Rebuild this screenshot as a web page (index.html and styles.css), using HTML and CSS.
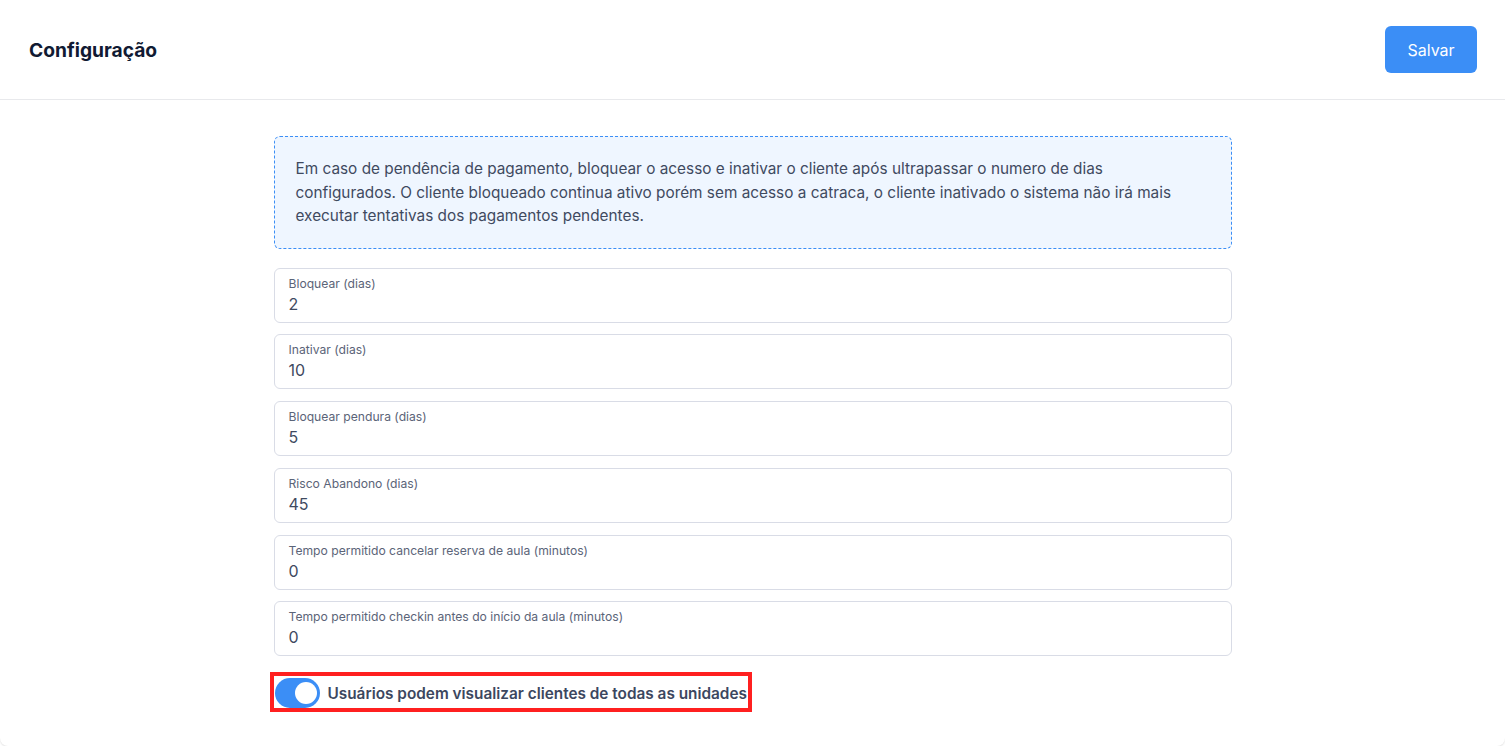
FILE: index.html
```html
<!DOCTYPE html>
<html lang="pt-BR">
<head>
<meta charset="utf-8">
<title>Configuração</title>
<link rel="stylesheet" href="styles.css">
</head>
<body>
<div class="card">
  <header class="header">
    <h1 class="title">Configuração</h1>
    <button class="btn-primary" type="button">Salvar</button>
  </header>
  <main class="content">
    <div class="info">
      Em caso de pendência de pagamento, bloquear o acesso e inativar o cliente após ultrapassar o numero de dias configurados. O cliente bloqueado continua ativo porém sem acesso a catraca, o cliente inativado o sistema não irá mais executar tentativas dos pagamentos pendentes.
    </div>
    <div class="fields">
      <label class="field"><span class="field-label">Bloquear (dias)</span><span class="field-value">2</span></label>
      <label class="field"><span class="field-label">Inativar (dias)</span><span class="field-value">10</span></label>
      <label class="field"><span class="field-label">Bloquear pendura (dias)</span><span class="field-value">5</span></label>
      <label class="field"><span class="field-label">Risco Abandono (dias)</span><span class="field-value">45</span></label>
      <label class="field"><span class="field-label">Tempo permitido cancelar reserva de aula (minutos)</span><span class="field-value">0</span></label>
      <label class="field"><span class="field-label">Tempo permitido checkin antes do início da aula (minutos)</span><span class="field-value">0</span></label>
    </div>
    <div class="toggle-row">
      <span class="toggle"><span class="knob"></span></span>
      <span class="toggle-label">Usuários podem visualizar clientes de todas as unidades</span>
    </div>
  </main>
</div>
</body>
</html>
```

FILE: styles.css
```css
* { box-sizing: border-box; }
html, body { margin: 0; padding: 0; background: #ffffff; }
body {
  font-family: Inter, "Noto Sans", "Liberation Sans", sans-serif;
  color: #3f4a5f;
}
.card {
  height: 746px;
  background: #fff;
  border-radius: 0 0 8px 8px;
  box-shadow: 0 1px 2px rgba(0, 0, 0, 0.12);
}
.header {
  height: 100px;
  border-bottom: 1px solid #e8e9ec;
  display: flex;
  align-items: center;
  justify-content: space-between;
  padding: 0 28px 0 29px;
}
.title {
  margin: 0;
  font-size: 19.2px;
  font-weight: 700;
  color: #111a33;
}
.btn-primary {
  width: 92px;
  height: 47px;
  border: none;
  border-radius: 6px;
  background: #3b8ef6;
  color: #fff;
  font-family: inherit;
  font-size: 16px;
  font-weight: 400;
}
.content {
  width: 958px;
  margin: 0 auto;
  padding-top: 36px;
}
.info {
  border: 1px dashed #3b8ef6;
  border-radius: 6px;
  background: #eff6ff;
  padding: 20px 24px 20px 21px;
  font-size: 15.35px;
  line-height: 23.5px;
  color: #3f4a5f;
}
.fields {
  margin-top: 19px;
  display: flex;
  flex-direction: column;
  gap: 11.8px;
}
.field {
  display: flex;
  flex-direction: column;
  height: 55px;
  border: 1px solid #d9dce6;
  border-radius: 6px;
  padding: 7px 14px 0;
}
.field-label {
  font-size: 12.15px;
  line-height: 16px;
  color: #5b6478;
}
.field-value {
  margin-top: 2px;
  font-size: 16px;
  line-height: 20px;
  color: #3f4a5f;
}
.toggle-row {
  margin-top: 16px;
  margin-left: -4px;
  display: inline-flex;
  align-items: flex-start;
  border: 4px solid #ff2020;
  padding: 2px 1px 0 1px;
  height: 40px;
}
.toggle {
  width: 45px;
  height: 30px;
  border-radius: 15px;
  background: #3b8ef6;
  position: relative;
  flex: none;
}
.knob {
  position: absolute;
  right: 3px;
  top: 4px;
  width: 22px;
  height: 22px;
  border-radius: 50%;
  background: #fff;
}
.toggle-label {
  margin-left: 8px;
  font-size: 15.35px;
  font-weight: 600;
  line-height: 31px;
  color: #3c4760;
  white-space: nowrap;
}
```
